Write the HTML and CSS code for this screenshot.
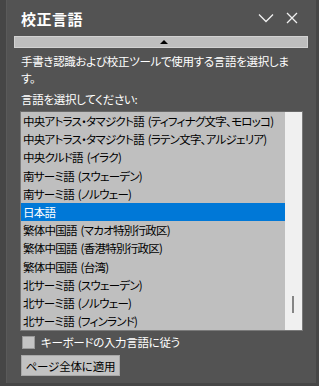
FILE: index.html
```html
<!DOCTYPE html>
<html lang="ja">
  <head>
    <meta charset="UTF-8" />
    <meta name="viewport" content="width=device-width, initial-scale=1.0" />
    <title>校正言語</title>
    <link rel="stylesheet" href="styles.css">
  </head>
  <body>
    <main class="pane">
      <header class="head">
        <h1 class="title">校正言語</h1>
        <div class="head-icons">
          <svg class="ico" width="16" height="10" viewBox="0 0 16 10">
            <path d="M1 1.5 L8 8.5 L15 1.5" fill="none" stroke="#f0f0f0" stroke-width="1.3" />
          </svg>
          <svg class="ico" width="12" height="12" viewBox="0 0 12 12">
            <path d="M1 1 L11 11 M11 1 L1 11" fill="none" stroke="#f0f0f0" stroke-width="1.3" />
          </svg>
        </div>
      </header>

      <div class="collapse-bar"><span class="tri"></span></div>

      <p class="desc">手書き認識および校正ツールで使用する言語を選択します。</p>

      <div class="label">言語を選択してください:</div>

      <div class="listbox">
        <ul class="items">
          <li>中央アトラス・タマジクト語 (ティフィナグ文字、モロッコ)</li>
          <li>中央アトラス・タマジクト語 (ラテン文字、アルジェリア)</li>
          <li>中央クルド語 (イラク)</li>
          <li>南サーミ語 (スウェーデン)</li>
          <li>南サーミ語 (ノルウェー)</li>
          <li class="selected">日本語</li>
          <li>繁体中国語 (マカオ特別行政区)</li>
          <li>繁体中国語 (香港特別行政区)</li>
          <li>繁体中国語 (台湾)</li>
          <li>北サーミ語 (スウェーデン)</li>
          <li>北サーミ語 (ノルウェー)</li>
          <li>北サーミ語 (フィンランド)</li>
        </ul>
        <div class="scroll"><span class="thumb"></span></div>
      </div>

      <label class="check">
        <span class="box"></span>
        キーボードの入力言語に従う
      </label>

      <button class="apply">ページ全体に適用</button>
    </main>
  </body>
</html>
```

FILE: styles.css
```css
* {
  padding: 0;
  margin: 0;
  box-sizing: border-box;
}
html {
  font-family: "Noto Sans CJK JP", "Noto Sans", sans-serif;
  font-size: 11.5px;
  font-feature-settings: "palt";
}
body {
  background-color: #464646;
  width: 319px;
  height: 386px;
  overflow: hidden;
}
.pane {
  margin-left: 6px;
  width: 310px;
  height: 383px;
  background-color: #535353;
  border-left: 1px solid #5a5a5a;
  color: #ffffff;
  display: flex;
  flex-direction: column;
}
.head {
  height: 36px;
  display: flex;
  align-items: center;
  padding-left: 14px;
  padding-right: 18px;
}
.title {
  font-size: 15px;
  font-weight: bold;
  flex: 1;
  letter-spacing: 0.5px;
}
.head-icons {
  display: flex;
  align-items: center;
  gap: 12px;
}
.collapse-bar {
  margin-left: 7px;
  width: 294px;
  height: 12px;
  background-color: #bebebe;
  border: 1px solid #d2d2d2;
  display: flex;
  justify-content: center;
  align-items: center;
}
.tri {
  width: 0;
  height: 0;
  border-left: 4px solid transparent;
  border-right: 4px solid transparent;
  border-bottom: 4px solid #000;
  margin-left: 6px;
}
.desc {
  padding-left: 14px;
  padding-right: 22px;
  margin-top: 5px;
  line-height: 17px;
  letter-spacing: -0.3px;
}
.label {
  padding-left: 14px;
  margin-top: 4px;
  line-height: 17px;
  letter-spacing: -0.3px;
}
.listbox {
  margin-left: 13px;
  margin-top: 3px;
  width: 283px;
  height: 220px;
  border: 1px solid #7a7a7a;
  border-top-color: #6a6a6a;
  background-color: #bfbfbf;
  display: flex;
}
.items {
  list-style: none;
  flex: 1;
  color: #000;
  overflow: hidden;
}
.items li {
  height: 18.2px;
  line-height: 18px;
  padding-left: 2px;
  white-space: nowrap;
  letter-spacing: -0.75px;
  word-spacing: 2px;
}
.items li.selected {
  background-color: #0078d7;
  color: #fff;
}
.scroll {
  width: 17px;
  background-color: #f0f0f0;
  position: relative;
}
.thumb {
  position: absolute;
  left: 7px;
  top: 184px;
  width: 2px;
  height: 17px;
  background-color: #858585;
}
.check {
  display: flex;
  align-items: center;
  gap: 6px;
  padding-left: 15px;
  margin-top: 4px;
  height: 14px;
  letter-spacing: -0.3px;
}
.box {
  width: 13px;
  height: 13px;
  background-color: #c4c4c4;
  border: 1px solid #9a9a9a;
}
.apply {
  margin-left: 14px;
  margin-top: 6px;
  width: 99px;
  height: 21px;
  font-family: inherit;
  font-size: 11.5px;
  background-color: #c2c2c2;
  border: 1px solid #a8a8a8;
  color: #000;
  text-align: center;
  letter-spacing: -0.3px;
}
```
